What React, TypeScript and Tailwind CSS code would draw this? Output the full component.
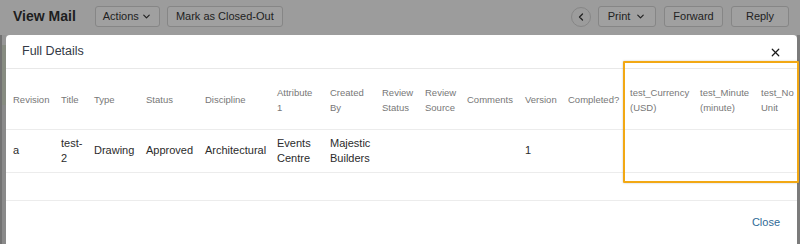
import React from "react";
import { ChevronDown, ChevronLeft, X } from "lucide-react";

interface Column {
  label: string[];
  width: number;
}

const columns: Column[] = [
  { label: ["Revision"], width: 48 },
  { label: ["Title"], width: 33 },
  { label: ["Type"], width: 52 },
  { label: ["Status"], width: 59 },
  { label: ["Discipline"], width: 72 },
  { label: ["Attribute", "1"], width: 53 },
  { label: ["Created", "By"], width: 52 },
  { label: ["Review", "Status"], width: 43 },
  { label: ["Review", "Source"], width: 42 },
  { label: ["Comments"], width: 58 },
  { label: ["Version"], width: 43 },
  { label: ["Completed?"], width: 62 },
  { label: ["test_Currency", "(USD)"], width: 70 },
  { label: ["test_Minute", "(minute)"], width: 61 },
  { label: ["test_No", "Unit"], width: 60 },
];

const tableWidth = columns.reduce((s, c) => s + c.width, 0);

const row: string[][] = [
  ["a"],
  ["test-", "2"],
  ["Drawing"],
  ["Approved"],
  ["Architectural"],
  ["Events", "Centre"],
  ["Majestic", "Builders"],
  [],
  [],
  [],
  ["1"],
  [],
  [],
  [],
  [],
];

const TopButton: React.FC<{ children: React.ReactNode; className?: string }> = ({
  children,
  className = "",
}) => (
  <button
    className={`h-[21px] flex items-center justify-center gap-[2px] rounded-[3px] border border-[#868686] bg-[#a0a0a0] text-[11px] text-[#222] ${className}`}
  >
    {children}
  </button>
);

const Lines: React.FC<{ lines: string[] }> = ({ lines }) => (
  <>
    {lines.map((l, i) => (
      <div key={i} className="whitespace-nowrap">
        {l}
      </div>
    ))}
  </>
);

export default function App() {
  return (
    <div
      className="w-[800px] h-[244px] overflow-hidden bg-[#9c9c9c] flex flex-col"
      style={{ fontFamily: '"Liberation Sans", Arial, sans-serif' }}
    >
      {/* page toolbar under the backdrop */}
      <div className="h-[35px] shrink-0 flex items-center pl-[13px] pr-[11px] pb-[2px]">
        <h1 className="text-[14px] font-bold text-[#1e1e1e] mr-[19px]">View Mail</h1>
        <div className="flex gap-[7px]">
          <TopButton className="w-[65px]">
            Actions <ChevronDown size={11} strokeWidth={2.6} />
          </TopButton>
          <TopButton className="w-[116px]">Mark as Closed-Out</TopButton>
        </div>
        <div className="ml-auto flex items-center gap-[8px]">
          <button className="w-[20px] h-[20px] rounded-full border border-[#868686] flex items-center justify-center text-[#222] mr-[-1px]">
            <ChevronLeft size={12} strokeWidth={2.6} />
          </button>
          <TopButton className="w-[58px] gap-[5px]">
            Print
            <ChevronDown size={11} strokeWidth={2.6} />
          </TopButton>
          <TopButton className="w-[59px]">Forward</TopButton>
          <TopButton className="w-[58px]">Reply</TopButton>
        </div>
      </div>

      <div className="flex flex-1 min-h-0">
        {/* sliver of page behind the modal */}
        <div className="w-[6px] shrink-0 flex flex-col border-l-2 border-[#727272]">
          <div className="h-[10px] bg-[#969696]" />
          <div className="h-[60px] bg-[#878c81]" />
          <div className="flex-1 bg-[#8a8a8a]" />
        </div>

        {/* modal */}
        <div className="relative w-[791px] shrink-0 bg-white rounded-t-[4px] flex flex-col">
          <div className="h-[34px] shrink-0 flex items-center justify-between pl-[16px] pr-[15px] border-b border-[#e8e8e8]">
            <h2 className="text-[12.5px] text-[#343a46]">Full Details</h2>
            <X size={13} strokeWidth={2.2} className="text-[#1a1a1a] mt-[1px]" />
          </div>

          <div className="overflow-hidden">
            <table className="table-fixed border-collapse" style={{ width: tableWidth }}>
              <thead>
                <tr className="h-[60px] border-b border-[#ececec]">
                  {columns.map((c, i) => (
                    <th
                      key={i}
                      style={{ width: c.width }}
                      className="pl-[7px] pr-0 pt-[2px] text-left align-middle font-normal text-[9.5px] leading-[15px] text-[#777]"
                    >
                      <Lines lines={c.label} />
                    </th>
                  ))}
                </tr>
              </thead>
              <tbody>
                <tr className="h-[43px] border-b border-[#ececec]">
                  {row.map((cell, i) => (
                    <td
                      key={i}
                      className="pl-[7px] align-middle text-[11px] leading-[15px] text-[#2b2b2b]"
                    >
                      <Lines lines={cell} />
                    </td>
                  ))}
                </tr>
              </tbody>
            </table>
          </div>

          <div className="h-[27px] shrink-0" />

          <div className="flex-1 border-t border-[#ececec] flex items-start justify-end pt-[13px] pr-[17px]">
            <button className="text-[11px] text-[#2f6a96]">Close</button>
          </div>

          {/* highlight annotation */}
          <div className="absolute left-[617px] top-[26px] w-[176px] h-[122px] border-2 border-[#f2a814] rounded-[1px] shadow-[0_0_2px_rgba(0,0,0,0.25)] pointer-events-none" />
        </div>

        <div className="flex-1 bg-[#7b7b7b]" />
      </div>
    </div>
  );
}
